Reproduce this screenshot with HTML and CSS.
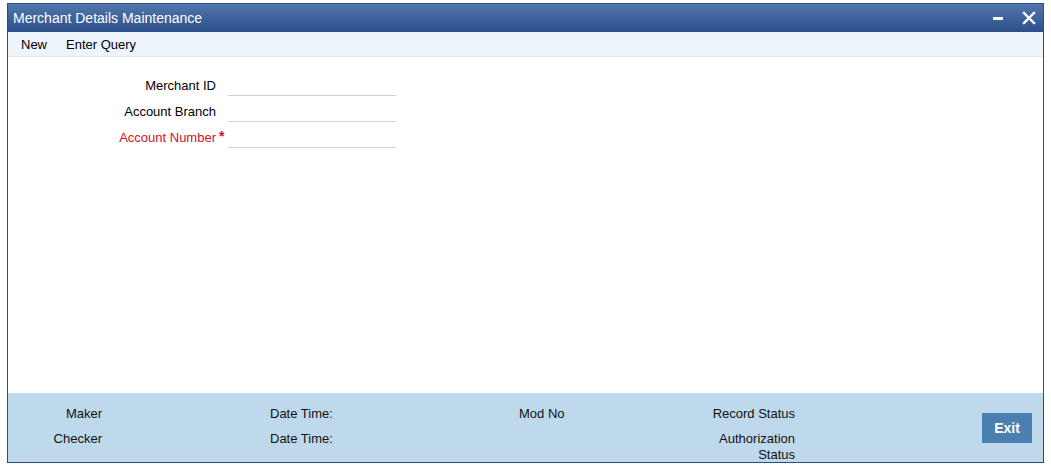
FILE: index.html
```html
<!DOCTYPE html>
<html>
<head>
<meta charset="utf-8">
<link rel="stylesheet" href="styles.css">
</head>
<body>
<div class="window">
  <div class="titlebar">
    <span class="title">Merchant Details Maintenance</span>
    <div class="win-ctrls">
      <svg class="ic-min" width="12" height="12" viewBox="0 0 12 12"><rect x="1" y="5" width="10" height="3" fill="#fff"/></svg>
      <svg class="ic-close" width="14" height="14" viewBox="0 0 14 14"><path d="M2 2 L12 12 M12 2 L2 12" stroke="#fff" stroke-width="2.4" stroke-linecap="square"/></svg>
    </div>
  </div>
  <div class="toolbar">
    <span class="tb-item">New</span>
    <span class="tb-item">Enter Query</span>
  </div>
  <div class="content">
    <div class="form">
      <label class="lbl">Merchant ID</label><span class="star"></span><input class="fld" type="text">
      <label class="lbl">Account Branch</label><span class="star"></span><input class="fld" type="text">
      <label class="lbl req">Account Number</label><span class="star req">*</span><input class="fld" type="text">
    </div>
  </div>
  <div class="footer">
    <span class="f-maker">Maker</span>
    <span class="f-dt1">Date Time:</span>
    <span class="f-mod">Mod No</span>
    <span class="f-rec">Record Status</span>
    <span class="f-checker">Checker</span>
    <span class="f-dt2">Date Time:</span>
    <span class="f-auth">Authorization<br>Status</span>
    <button class="exit">Exit</button>
  </div>
</div>
</body>
</html>
```
FILE: styles.css
```css
html, body {
  margin: 0;
  padding: 0;
  background: #fff;
}
body {
  font-family: "Liberation Sans", Arial, sans-serif;
  font-size: 13px;
  color: #000;
  padding: 3px 0 0 7px;
}
.window {
  width: 1035px;
  height: 458px;
  border: 1px solid #2d4b7e;
  display: flex;
  flex-direction: column;
  background: #fff;
}
.titlebar {
  height: 28px;
  flex: none;
  background: linear-gradient(#5077ad, #2c4f89);
  display: flex;
  align-items: center;
  justify-content: space-between;
  padding: 0 7px 0 5px;
  color: #fff;
}
.title {
  font-size: 14px;
  padding-bottom: 1px;
}
.win-ctrls {
  display: flex;
  align-items: center;
  gap: 18px;
}
.ic-min { display: block; }
.ic-close { display: block; }
.toolbar {
  height: 24px;
  flex: none;
  background: #edf4fc;
  border-bottom: 1px solid #e1e8f0;
  display: flex;
  align-items: center;
  padding-left: 13px;
  gap: 19px;
}
.content {
  flex: 1;
  padding-top: 19px;
}
.form {
  display: grid;
  grid-template-columns: 208px 12px 168px;
  grid-auto-rows: 20px;
  row-gap: 6px;
  align-items: center;
}
.lbl {
  text-align: right;
  padding-bottom: 2px;
}
.req {
  color: #d0112b;
}
.star {
  font-size: 14px;
  font-weight: bold;
  padding-left: 3px;
  align-self: start;
  line-height: 16px;
}
.fld {
  box-sizing: border-box;
  height: 20px;
  border: none;
  border-bottom: 1px solid #d0d0d0;
  background: transparent;
  padding: 0;
  margin: 0;
  outline: none;
  font: inherit;
}
.footer {
  height: 69px;
  flex: none;
  background: #bfd9ec;
  box-sizing: border-box;
  padding-top: 13px;
  display: grid;
  grid-template-columns: 94px 168px 249px 156px 120px 187px 50px;
  grid-template-rows: 16px auto;
  row-gap: 9px;
  line-height: 16px;
  color: #111;
  align-content: start;
}
.f-maker { grid-column: 1; grid-row: 1; text-align: right; }
.f-checker { grid-column: 1; grid-row: 2; text-align: right; }
.f-dt1 { grid-column: 3; grid-row: 1; }
.f-dt2 { grid-column: 3; grid-row: 2; }
.f-mod { grid-column: 4; grid-row: 1; }
.f-rec { grid-column: 5; grid-row: 1; text-align: right; white-space: nowrap; }
.f-auth { grid-column: 5; grid-row: 2; text-align: right; }
.exit {
  grid-column: 7;
  grid-row: 1 / span 2;
  align-self: start;
  margin-top: 7px;
  width: 50px;
  height: 30px;
  border: none;
  background: #4b7fb0;
  color: #fff;
  font-family: "Liberation Sans", Arial, sans-serif;
  font-size: 14px;
  font-weight: bold;
  padding: 0;
}
```
